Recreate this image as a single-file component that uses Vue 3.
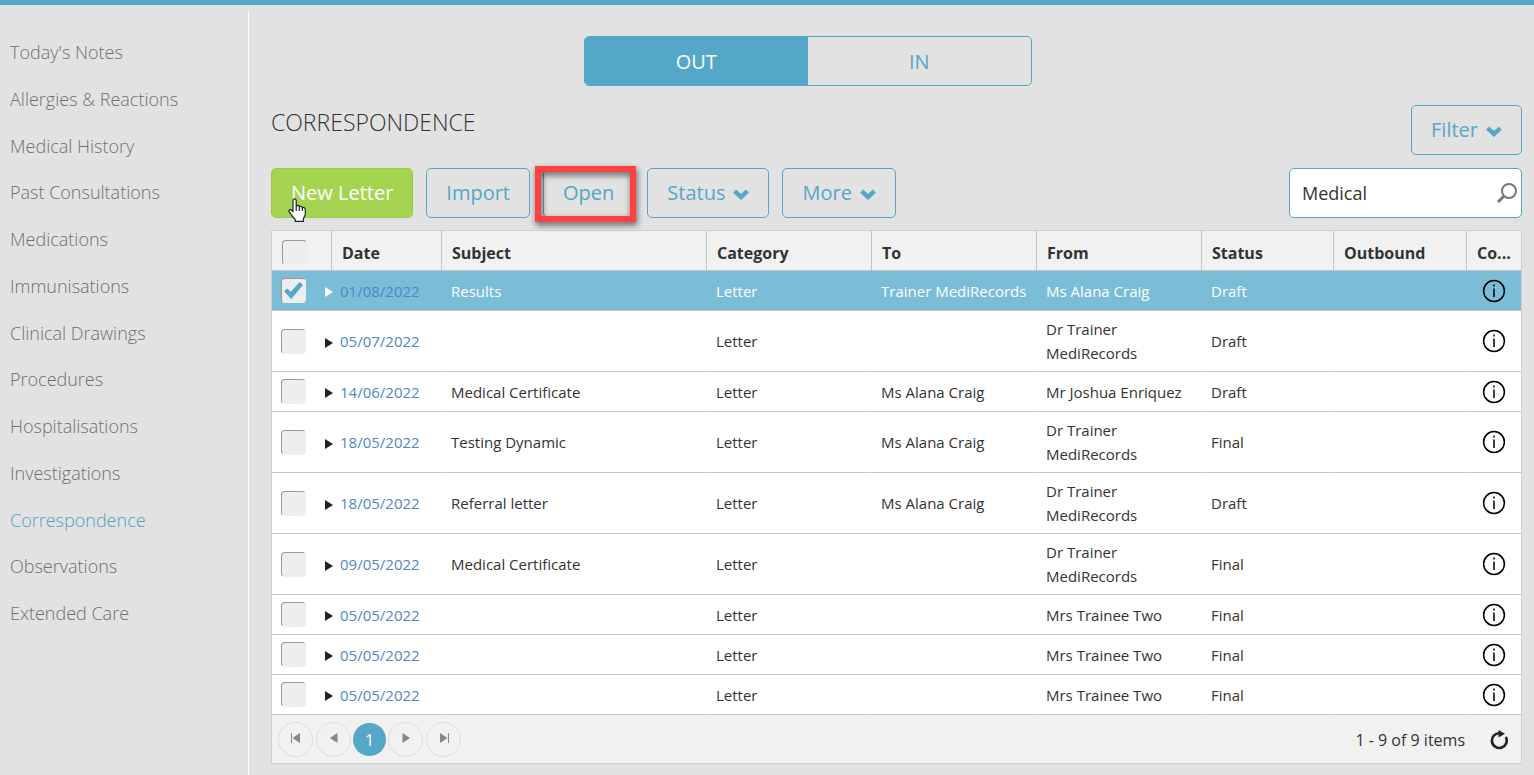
<script setup>
import { ref } from 'vue'

const menu = [
  "Today's Notes",
  'Allergies & Reactions',
  'Medical History',
  'Past Consultations',
  'Medications',
  'Immunisations',
  'Clinical Drawings',
  'Procedures',
  'Hospitalisations',
  'Investigations',
  'Correspondence',
  'Observations',
  'Extended Care',
]
const active = 'Correspondence'

const direction = ref('OUT')
const search = ref('Medical')

const columns = [
  { key: 'date', label: 'Date' },
  { key: 'subject', label: 'Subject' },
  { key: 'category', label: 'Category' },
  { key: 'to', label: 'To' },
  { key: 'from', label: 'From' },
  { key: 'status', label: 'Status' },
  { key: 'outbound', label: 'Outbound' },
  { key: 'comments', label: 'Co...' },
]

const rows = ref([
  { date: '01/08/2022', subject: 'Results', to: 'Trainer MediRecords', from: 'Ms Alana Craig', status: 'Draft', selected: true },
  { date: '05/07/2022', subject: '', to: '', from: 'Dr Trainer MediRecords', status: 'Draft', selected: false },
  { date: '14/06/2022', subject: 'Medical Certificate', to: 'Ms Alana Craig', from: 'Mr Joshua Enriquez', status: 'Draft', selected: false },
  { date: '18/05/2022', subject: 'Testing Dynamic', to: 'Ms Alana Craig', from: 'Dr Trainer MediRecords', status: 'Final', selected: false },
  { date: '18/05/2022', subject: 'Referral letter', to: 'Ms Alana Craig', from: 'Dr Trainer MediRecords', status: 'Draft', selected: false },
  { date: '09/05/2022', subject: 'Medical Certificate', to: '', from: 'Dr Trainer MediRecords', status: 'Final', selected: false },
  { date: '05/05/2022', subject: '', to: '', from: 'Mrs Trainee Two', status: 'Final', selected: false },
  { date: '05/05/2022', subject: '', to: '', from: 'Mrs Trainee Two', status: 'Final', selected: false },
  { date: '05/05/2022', subject: '', to: '', from: 'Mrs Trainee Two', status: 'Final', selected: false },
])
</script>

<template>
  <div class="page">
    <div class="topbar"></div>
    <div class="body">
      <nav class="sidebar" aria-label="Patient record">
        <ul>
          <li v-for="item in menu" :key="item">
            <a href="#" :class="{ active: item === active }">{{ item }}</a>
          </li>
        </ul>
      </nav>

      <main class="main">
        <div class="toggle">
          <button
            v-for="d in ['OUT', 'IN']"
            :key="d"
            type="button"
            :class="{ on: direction === d }"
            @click="direction = d"
          >{{ d }}</button>
        </div>

        <div class="titlebar">
          <h1>CORRESPONDENCE</h1>
          <button type="button" class="btn">
            Filter
            <svg class="chevron" viewBox="0 0 16 11" aria-hidden="true"><path d="M1.6 2.2 L8 8 L14.4 2.2" /></svg>
          </button>
        </div>

        <div class="toolbar">
          <button type="button" class="btn primary">
            New Letter
            <svg class="cursor" viewBox="0 0 19 25" aria-hidden="true">
              <path d="M5 2.6 C5 0.4 8.2 0.4 8.2 2.6 V8.2 C8.6 7 11.2 7.2 11.3 8.8 C12 7.8 14.2 8.2 14.3 9.8 C15.2 9 17.3 9.6 17.3 11.4 V15.5 C17.3 18 15.6 19.5 15.4 21 V23.4 H7.2 V21.5 C5 19.6 3.6 17 1.3 14.2 C0.2 12.4 2 11 3.4 12 L5 13.6 Z" />
              <path d="M8.2 8 V13 M11.3 8.8 V13 M14.3 9.8 V13" />
            </svg>
          </button>
          <button type="button" class="btn">Import</button>
          <span class="highlighted">
            <button type="button" class="btn">Open</button>
            <span class="marker"></span>
          </span>
          <button type="button" class="btn">
            Status
            <svg class="chevron" viewBox="0 0 16 11" aria-hidden="true"><path d="M1.6 2.2 L8 8 L14.4 2.2" /></svg>
          </button>
          <button type="button" class="btn">
            More
            <svg class="chevron" viewBox="0 0 16 11" aria-hidden="true"><path d="M1.6 2.2 L8 8 L14.4 2.2" /></svg>
          </button>
          <div class="search">
            <input v-model="search" type="text" aria-label="Search correspondence" />
            <button type="button" aria-label="Search">
              <svg viewBox="0 0 20 20" aria-hidden="true">
                <circle cx="12" cy="8" r="7" />
                <path d="M7 13 L1 19" class="handle" />
              </svg>
            </button>
          </div>
        </div>

        <section class="grid">
          <table>
            <colgroup>
              <col class="c-select" />
              <col v-for="c in columns" :key="c.key" :class="'c-' + c.key" />
            </colgroup>
            <thead>
              <tr>
                <th class="select"><input type="checkbox" aria-label="Select all" /></th>
                <th v-for="c in columns" :key="c.key" scope="col">{{ c.label }}</th>
              </tr>
            </thead>
            <tbody>
              <tr v-for="(row, i) in rows" :key="i" :class="{ selected: row.selected }">
                <td class="select">
                  <div class="select-inner">
                    <input v-model="row.selected" type="checkbox" :aria-label="'Select letter ' + row.date" />
                    <button type="button" class="expand" aria-label="Expand">
                      <svg viewBox="0 0 8 10" aria-hidden="true"><path d="M0 0 L8 5 L0 10 Z" /></svg>
                    </button>
                  </div>
                </td>
                <td class="date"><a href="#">{{ row.date }}</a></td>
                <td>{{ row.subject }}</td>
                <td>Letter</td>
                <td>{{ row.to }}</td>
                <td>{{ row.from }}</td>
                <td>{{ row.status }}</td>
                <td></td>
                <td class="info">
                  <button type="button" aria-label="Comments">
                    <svg viewBox="0 0 24 24" aria-hidden="true">
                      <circle cx="12" cy="12" r="10.4" />
                      <path d="M12 9.5 V18" />
                      <path d="M12 5.5 V7.5" />
                    </svg>
                  </button>
                </td>
              </tr>
            </tbody>
          </table>

          <footer class="pager">
            <div class="pages">
              <button type="button" aria-label="First page">
                <svg viewBox="0 0 10 10" aria-hidden="true"><path d="M0 0 H1 V10 H0 Z M9 0 V10 L1.5 5 Z" /></svg>
              </button>
              <button type="button" aria-label="Previous page">
                <svg viewBox="0 0 10 10" aria-hidden="true"><path d="M8.5 0 V10 L1 5 Z" /></svg>
              </button>
              <button type="button" class="current" aria-current="page">1</button>
              <button type="button" aria-label="Next page">
                <svg viewBox="0 0 10 10" aria-hidden="true"><path d="M1.5 0 V10 L9 5 Z" /></svg>
              </button>
              <button type="button" aria-label="Last page">
                <svg viewBox="0 0 10 10" aria-hidden="true"><path d="M9 0 H10 V10 H9 Z M1 0 V10 L8.5 5 Z" /></svg>
              </button>
            </div>
            <span class="count">1 - 9 of 9 items</span>
            <button type="button" class="refresh" aria-label="Refresh">
              <svg viewBox="0 0 20 20" aria-hidden="true">
                <path class="arc" d="M10.5 3.2 A7.4 7.4 0 1 0 16.8 7" />
                <path class="head" d="M9.5 0 L16 3.8 L9.5 7.4 Z" />
              </svg>
            </button>
          </footer>
        </section>
      </main>
    </div>
  </div>
</template>

<style>
body {
  background: #e2e2e2;
}
</style>

<style scoped>
.page {
  display: flex;
  flex-direction: column;
  min-height: 100vh;
  color: #333;
  font-family: 'Open Sans', 'Noto Sans', sans-serif;
  font-size: 15px;
  line-height: 24px;
}
.page *,
.page {
  box-sizing: border-box;
}
button,
input {
  margin: 0;
  font: inherit;
  color: inherit;
}
button {
  padding: 0;
  border: 0;
  background: none;
  cursor: pointer;
}
a {
  text-decoration: none;
}
svg {
  display: block;
  fill: none;
}
.topbar {
  height: 5px;
  background: #55a7c8;
}
.body {
  display: flex;
  flex: 1;
}
.sidebar {
  flex: none;
  width: 249px;
  margin-top: 6px;
  border-right: 1px solid #fff;
}
.sidebar ul {
  display: flex;
  flex-direction: column;
  justify-content: space-between;
  min-height: 615px;
  margin: 0;
  padding: 28px 10px 0;
  list-style: none;
}
.sidebar a {
  display: block;
  color: #707070;
  font-size: 18px;
  font-weight: 350;
  line-height: 26px;
}
.sidebar a.active {
  color: #4ba2c5;
}
.main {
  flex: 1;
  min-width: 0;
  padding: 31px 12px 10px 22px;
}
.toggle {
  display: flex;
  width: 448px;
  margin-left: 25%;
  overflow: hidden;
  border: 1px solid #55a7c8;
  border-radius: 5px;
}
.toggle button {
  flex: 1;
  height: 48px;
  padding-top: 1px;
  color: #55a7c8;
  font-size: 20px;
}
.toggle button.on {
  background: #55a7c8;
  color: #fff;
}
.titlebar {
  display: flex;
  align-items: center;
  justify-content: space-between;
  margin-top: 19px;
}
h1 {
  margin: 0 0 16px;
  font-size: 23px;
  font-weight: 350;
  line-height: 32px;
}
.btn {
  position: relative;
  display: flex;
  align-items: center;
  gap: 8px;
  height: 50px;
  padding: 0 19px;
  border: 1px solid #55a7c8;
  border-radius: 5px;
  color: #55a7c8;
  font-size: 20px;
  white-space: nowrap;
}
.btn.primary {
  border-color: #98cc48;
  background: #a5d550;
  color: #fff;
}
.chevron {
  width: 16px;
  height: 11px;
  margin-top: 3px;
  stroke: #55a7c8;
  stroke-width: 4.4;
}
.cursor {
  position: absolute;
  left: 16px;
  top: 29px;
  width: 19px;
  height: 25px;
  fill: #fff;
  stroke: #222;
  stroke-width: 1.2;
  stroke-linejoin: round;
}
.toolbar {
  display: flex;
  align-items: center;
  gap: 13px;
  margin-top: 13px;
}
.highlighted {
  position: relative;
}
.marker {
  position: absolute;
  inset: -2px -2px -4px -8px;
  border: 6px solid #fe4141;
  filter: drop-shadow(1px 3px 3px rgba(0, 0, 0, 0.6));
  pointer-events: none;
}
.search {
  display: flex;
  align-items: center;
  width: 233px;
  height: 50px;
  margin-left: auto;
  padding: 0 4px 0 12px;
  border: 1px solid #55a7c8;
  border-radius: 5px;
  background: #fff;
}
.search input {
  flex: 1;
  min-width: 0;
  padding: 0;
  border: 0;
  outline: 0;
  background: none;
  font-size: 18px;
}
.search svg {
  width: 20px;
  height: 20px;
  stroke: #777;
  stroke-width: 2;
}
.search .handle {
  stroke-width: 3;
}
.grid {
  margin-top: 12px;
  border: 1px solid #d0d0d0;
  background: #fff;
}
table {
  width: 100%;
  table-layout: fixed;
  border-collapse: separate;
  border-spacing: 0;
}
.c-select {
  width: 60px;
}
.c-date {
  width: 110px;
}
.c-category,
.c-to,
.c-from {
  width: 165px;
}
.c-status {
  width: 132px;
}
.c-outbound {
  width: 133px;
}
.c-comments {
  width: 54px;
}
th {
  height: 40px;
  padding: 5px 10px 0;
  overflow: hidden;
  border-right: 1px solid #c5c5c5;
  border-bottom: 1px solid #c5c5c5;
  background: #f1f1f1;
  font-size: 16px;
  font-weight: 700;
  text-align: left;
  text-overflow: ellipsis;
  white-space: nowrap;
}
th:last-child {
  padding-right: 4px;
  border-right: 0;
}
th.select {
  padding: 4px 10px 0;
}
td {
  height: 40px;
  padding: 6px 7px 6px 9px;
  border-right: 1px solid #fff;
  border-bottom: 1px solid #c5c5c5;
  vertical-align: middle;
}
td.select {
  padding: 0 0 0 9px;
  border-right: 0;
}
td.date {
  padding-left: 8px;
}
td:last-child {
  border-right: 0;
}
.selected td {
  border-right-color: #7bbdd6;
  background: #7bbdd6;
  color: #fff;
}
.select-inner {
  display: flex;
  align-items: center;
  gap: 19px;
}
input[type='checkbox'] {
  display: grid;
  flex: none;
  place-items: center;
  width: 25px;
  height: 25px;
  appearance: none;
  border: 1px solid #eee;
  border-top-color: #999;
  border-left-color: #999;
  border-radius: 4px;
  background: #eee;
}
input[type='checkbox']:checked::before {
  content: '';
  width: 19px;
  height: 17px;
  background: #55a7c8;
  clip-path: polygon(0 55%, 16% 38%, 36% 58%, 82% 0, 100% 18%, 38% 100%);
}
.expand svg {
  width: 8px;
  height: 10px;
  margin-top: 3px;
  fill: #222;
}
.selected .expand svg {
  fill: #fff;
}
td a {
  color: #4f86c6;
}
td.info {
  padding: 0;
}
.info button {
  display: block;
  margin: 0 auto;
}
.info svg {
  width: 24px;
  height: 24px;
  stroke: #000;
  stroke-width: 1.5;
}
.pager {
  display: flex;
  align-items: center;
  padding: 7px 12px 6px 6px;
  background: #f1f1f1;
}
.pages {
  display: flex;
  align-items: center;
  gap: 3px;
}
.pages button {
  display: grid;
  place-items: center;
  width: 35px;
  height: 35px;
  border: 1px solid #ddd;
  border-radius: 50%;
}
.pages svg {
  width: 10px;
  height: 10px;
  margin-bottom: 3px;
  fill: #888;
}
.pages .current {
  width: 33px;
  height: 33px;
  margin: 0 -1px;
  border: 0;
  background: #55a7c8;
  color: #fff;
  font-size: 16px;
}
.count {
  margin-left: auto;
  font-size: 16px;
}
.refresh {
  margin-left: 24px;
}
.refresh svg {
  width: 20px;
  height: 20px;
}
.refresh .arc {
  stroke: #222;
  stroke-width: 2.6;
}
.refresh .head {
  fill: #222;
}
</style>
